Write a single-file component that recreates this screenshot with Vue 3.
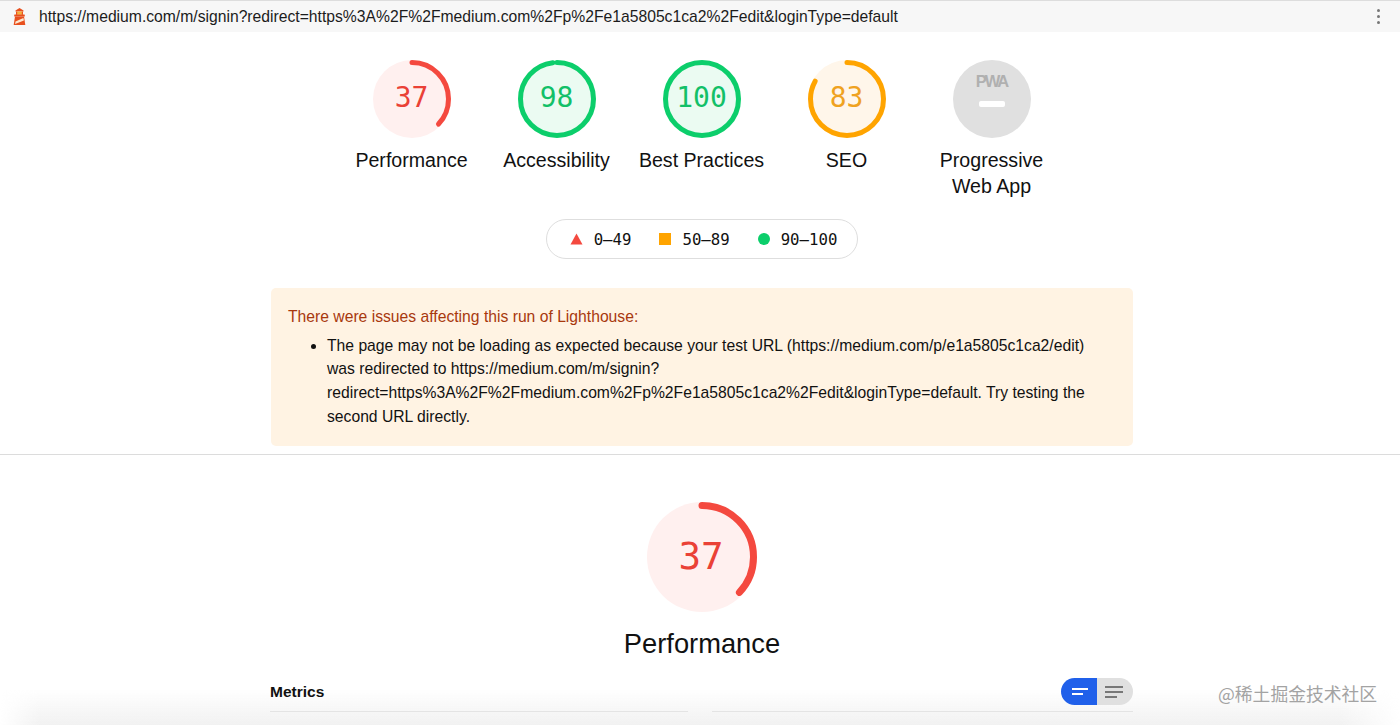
<template>
  <div class="report">
    <div class="fade"></div>

    <div class="topbar">
      <svg class="logo" viewBox="0 0 13 17" width="13" height="17">
        <path d="M6.5 0 L10.5 2.5 V3.6 H2.5 V2.5 Z" fill="#e8501e" />
        <rect x="3" y="3.6" width="7" height="3.2" fill="#f4b13c" />
        <rect x="3" y="3.6" width="1.2" height="3.2" fill="#e8501e" />
        <rect x="8.8" y="3.6" width="1.2" height="3.2" fill="#e8501e" />
        <rect x="1.2" y="6.6" width="10.6" height="2" rx="0.5" fill="#e8501e" />
        <path d="M2 8.5 H11 L12.3 17 H0.7 Z" fill="#e8501e" />
        <path d="M2.5 13.6 L10.4 10 L10.9 12.5 L2.1 16 Z" fill="#fde8d0" />
      </svg>
      <span class="url">{{ finalUrl }}</span>
      <div class="dots"><i></i><i></i><i></i></div>
    </div>

    <div class="content">
      <div class="gauges">
        <div v-for="g in gauges" :key="g.label" class="gauge-item">
          <svg class="gauge" viewBox="0 0 78 78" width="78" height="78">
            <circle cx="39" cy="39" r="39" :fill="g.bg" />
            <circle
              cx="39"
              cy="39"
              r="36.5"
              fill="none"
              stroke-width="5"
              stroke-linecap="round"
              transform="rotate(-90 39 39)"
              :stroke="g.color"
              :stroke-dasharray="dash(g.score, 36.5)"
            />
          </svg>
          <span class="gauge-score" :style="{ color: g.text }">{{ g.score }}</span>
          <div class="gauge-label">{{ g.label }}</div>
        </div>
        <div class="gauge-item">
          <div class="pwa">
            <span class="pwa-text">PWA</span>
            <span class="pwa-dash"></span>
          </div>
          <div class="gauge-label narrow">Progressive Web App</div>
        </div>
      </div>

      <div class="legend">
        <span class="legend-item">
          <svg width="13" height="12" viewBox="0 0 13 12"><path d="M6.5 0.5 L12.5 11.5 H0.5 Z" fill="#f4493f" /></svg>
          0–49
        </span>
        <span class="legend-item">
          <span class="sq"></span>
          50–89
        </span>
        <span class="legend-item">
          <span class="dot"></span>
          90–100
        </span>
      </div>

      <div class="warning">
        <div class="warning-title">There were issues affecting this run of Lighthouse:</div>
        <ul>
          <li>The page may not be loading as expected because your test URL (https://medium.com/p/e1a5805c1ca2/edit) was redirected to {{ finalUrl }}. Try testing the second URL directly.</li>
        </ul>
      </div>
    </div>

    <div class="divider"></div>

    <div class="content">
      <div class="big-gauge">
        <svg viewBox="0 0 110 110" width="110" height="110">
          <circle cx="55" cy="55" r="55" fill="#fff0ef" />
          <circle
            cx="55"
            cy="55"
            r="51.5"
            fill="none"
            stroke="#f4493f"
            stroke-width="7"
            stroke-linecap="round"
            transform="rotate(-90 55 55)"
            :stroke-dasharray="dash(37, 51.5)"
          />
        </svg>
        <span class="big-score">37</span>
      </div>
      <div class="big-label">Performance</div>

      <div class="metrics-head">
        <span class="metrics-title">Metrics</span>
        <div class="toggle">
          <div class="toggle-on"><i class="l1"></i><i class="l2"></i></div>
          <div class="toggle-off"><i></i><i></i><i class="short"></i></div>
        </div>
      </div>
      <div class="metrics-lines"><i></i><i></i></div>
    </div>

    <div class="watermark">@稀土掘金技术社区</div>
  </div>
</template>

<script setup>
const finalUrl = 'https://medium.com/m/signin?redirect=https%3A%2F%2Fmedium.com%2Fp%2Fe1a5805c1ca2%2Fedit&loginType=default'

const gauges = [
  { label: 'Performance', score: 37, color: '#f4493f', bg: '#fff0ef', text: '#ea4136' },
  { label: 'Accessibility', score: 98, color: '#0cce6b', bg: '#ebfbf2', text: '#12c068' },
  { label: 'Best Practices', score: 100, color: '#0cce6b', bg: '#ebfbf2', text: '#12c068' },
  { label: 'SEO', score: 83, color: '#ffa400', bg: '#fff6ea', text: '#efa21f' }
]

const dash = (score, r) => {
  const c = 2 * Math.PI * r
  return `${(score / 100) * c} ${c}`
}
</script>

<style>
html,
body {
  margin: 0;
  background: #fff;
}
</style>

<style scoped>
.report {
  position: relative;
  width: 1400px;
  height: 725px;
  overflow: hidden;
  background: #fff;
  font-family: "Liberation Sans", Arial, sans-serif;
  color: #111;
}

.topbar {
  height: 32px;
  box-sizing: border-box;
  border-top: 1px solid #ddd;
  background: #f7f7f7;
  display: flex;
  align-items: center;
  padding: 0 20px 0 13px;
}

.logo {
  flex: none;
  margin-right: 13px;
}

.url {
  flex: 1;
  font-size: 15.7px;
  white-space: nowrap;
  color: #1c1c1c;
}

.dots {
  display: flex;
  flex-direction: column;
  gap: 3px;
}

.dots i {
  width: 3px;
  height: 3px;
  border-radius: 50%;
  background: #777;
}

.content {
  position: relative;
  width: 862px;
  margin-left: 271px;
}

.gauges {
  display: flex;
  justify-content: center;
  padding: 28px 1px 0 0;
}

.gauge-item {
  position: relative;
  width: 145px;
  flex: none;
  display: flex;
  flex-direction: column;
  align-items: center;
  height: 159px;
}

.gauge {
  display: block;
}

.gauge-score {
  position: absolute;
  top: 0;
  left: 0;
  right: 0;
  height: 76px;
  line-height: 76px;
  text-align: center;
  font-family: "DejaVu Sans Mono", monospace;
  font-size: 28px;
}

.gauge-label {
  margin-top: 9px;
  font-size: 19.6px;
  line-height: 26px;
  text-align: center;
  white-space: nowrap;
}

.gauge-label.narrow {
  white-space: normal;
  width: 125px;
}

.pwa {
  position: relative;
  width: 78px;
  height: 78px;
  border-radius: 50%;
  background: #e0e0e0;
}

.pwa-text {
  position: absolute;
  top: 12px;
  left: 0;
  right: 0;
  text-align: center;
  font-size: 16.5px;
  line-height: 18px;
  font-weight: 700;
  letter-spacing: -2px;
  color: #b0b0b0;
}

.pwa-dash {
  position: absolute;
  top: 41px;
  left: 26px;
  width: 26px;
  height: 5.5px;
  border-radius: 2px;
  background: #fff;
}

.legend {
  width: fit-content;
  box-sizing: border-box;
  height: 40px;
  margin: 0 auto;
  padding: 0 20px 0 23px;
  border: 1px solid #dedede;
  border-radius: 20px;
  display: flex;
  align-items: center;
  gap: 28px;
  font-family: "DejaVu Sans Mono", monospace;
  font-size: 15.7px;
}

.legend-item {
  display: flex;
  align-items: center;
  gap: 11px;
}

.sq {
  width: 12px;
  height: 12px;
  background: #ffa400;
}

.dot {
  width: 12px;
  height: 12px;
  border-radius: 50%;
  background: #0cce6b;
}

.warning {
  margin-top: 29px;
  height: 158px;
  box-sizing: border-box;
  padding: 17px 17px;
  background: #fff3e3;
  border-radius: 5px;
  font-size: 15.7px;
  line-height: 23.7px;
}

.warning-title {
  color: #a8380e;
}

.warning ul {
  margin: 5px 0 0;
  padding: 0 26px 0 39px;
}

.warning li {
  overflow-wrap: anywhere;
}

.divider {
  height: 1px;
  margin-top: 8px;
  background: #dcdcdc;
}

.big-gauge {
  position: relative;
  width: 110px;
  height: 110px;
  margin: 47px auto 0;
}

.big-gauge svg {
  display: block;
}

.big-score {
  position: absolute;
  inset: 0 2px 0 0;
  line-height: 108px;
  text-align: center;
  font-family: "DejaVu Sans Mono", monospace;
  font-size: 37.5px;
  color: #ea4136;
}

.big-label {
  margin-top: 15px;
  text-align: center;
  font-size: 27.3px;
  line-height: 34px;
}

.metrics-head {
  display: flex;
  justify-content: space-between;
  align-items: center;
  margin: 17px 0 0 -1px;
}

.metrics-title {
  font-size: 15.5px;
  font-weight: 700;
}

.toggle {
  display: flex;
  width: 72px;
  height: 27px;
  border-radius: 14px;
  overflow: hidden;
}

.toggle-on,
.toggle-off {
  flex: 0 0 36px;
  box-sizing: border-box;
  display: flex;
  flex-direction: column;
  justify-content: center;
  gap: 3px;
}

.toggle-on {
  background: #2060ea;
  padding-left: 11px;
}

.toggle-on i {
  display: block;
  height: 2px;
  background: #fff;
}

.toggle-on .l1 {
  width: 16px;
}

.toggle-on .l2 {
  width: 11px;
}

.toggle-off {
  background: #e0e0e0;
  padding-left: 8px;
}

.toggle-off i {
  display: block;
  width: 18px;
  height: 2px;
  background: #777;
}

.toggle-off .short {
  width: 12px;
}

.metrics-lines {
  display: flex;
  justify-content: space-between;
  margin: 6px 0 0 -1px;
}

.metrics-lines i {
  display: block;
  height: 1px;
  background: #e4e4e4;
}

.metrics-lines i:first-child {
  width: 418px;
}

.metrics-lines i:last-child {
  width: 421px;
}

.fade {
  position: absolute;
  left: 0;
  right: 0;
  bottom: 0;
  height: 36px;
  background: linear-gradient(to bottom, rgba(240, 240, 240, 0), rgba(240, 240, 240, 0.9));
  -webkit-mask-image: linear-gradient(to right, transparent 0, #000 40px, #000 1340px, transparent 1400px);
  mask-image: linear-gradient(to right, transparent 0, #000 40px, #000 1340px, transparent 1400px);
  pointer-events: none;
}

.watermark {
  position: absolute;
  top: 681px;
  left: 1218px;
  font-family: "Noto Sans CJK SC", sans-serif;
  font-size: 17.8px;
  line-height: 24px;
  color: #a3a3a3;
  white-space: nowrap;
}
</style>
